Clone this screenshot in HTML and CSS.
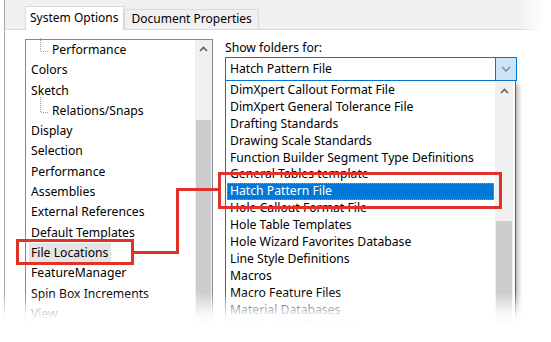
FILE: index.html
```html
<!DOCTYPE html>
<html>
<head>
<meta charset="utf-8">
<link rel="stylesheet" href="styles.css">
</head>
<body>
<div class="dialog">
  <div class="tabstrip">
    <div class="tab active">System Options</div>
    <div class="tab">Document Properties</div>
  </div>
  <div class="panel">
    <div class="tree">
      <div class="tree-items">
        <div class="row child first">Performance</div>
        <div class="row">Colors</div>
        <div class="row">Sketch</div>
        <div class="row child">Relations/Snaps</div>
        <div class="row">Display</div>
        <div class="row">Selection</div>
        <div class="row">Performance</div>
        <div class="row">Assemblies</div>
        <div class="row">External References</div>
        <div class="row">Default Templates</div>
        <div class="row"><span class="hover">File Locations</span></div>
        <div class="row">FeatureManager</div>
        <div class="row">Spin Box Increments</div>
        <div class="row">View</div>
        <div class="row">Backup/Recover</div>
      </div>
      <div class="vscroll tree-scroll">
        <div class="arrow"><svg width="9" height="6" viewBox="0 0 9 6"><path d="M1 5 L4.5 1.5 L8 5" fill="none" stroke="#606060" stroke-width="1.6"/></svg></div>
        <div class="track"></div>
        <div class="thumb"></div>
      </div>
    </div>
    <div class="right">
      <div class="label">Show folders for:</div>
      <div class="combo">
        <div class="combo-text">Hatch Pattern File</div>
        <div class="combo-btn"><svg width="10" height="6" viewBox="0 0 10 6"><path d="M1 1 L5 5 L9 1" fill="none" stroke="#808080" stroke-width="1.3"/></svg></div>
      </div>
      <div class="droplist">
        <div class="drop-items">
          <div class="ditem">DimXpert Callout Format File</div>
          <div class="ditem">DimXpert General Tolerance File</div>
          <div class="ditem">Drafting Standards</div>
          <div class="ditem">Drawing Scale Standards</div>
          <div class="ditem">Function Builder Segment Type Definitions</div>
          <div class="ditem">General Tables template</div>
          <div class="ditem selected">Hatch Pattern File</div>
          <div class="ditem">Hole Callout Format File</div>
          <div class="ditem">Hole Table Templates</div>
          <div class="ditem">Hole Wizard Favorites Database</div>
          <div class="ditem">Line Style Definitions</div>
          <div class="ditem">Macros</div>
          <div class="ditem">Macro Feature Files</div>
          <div class="ditem">Material Databases</div>
          <div class="ditem">Sensor Alert Templates</div>
        </div>
        <div class="vscroll drop-scroll">
          <div class="arrow"><svg width="9" height="6" viewBox="0 0 9 6"><path d="M1 5 L4.5 1.5 L8 5" fill="none" stroke="#606060" stroke-width="1.6"/></svg></div>
          <div class="track"></div>
          <div class="thumb"></div>
        </div>
      </div>
    </div>
  </div>
  <svg class="annot" width="551" height="342" viewBox="0 0 551 342">
    <g fill="none" stroke="#e0322b" stroke-width="3">
      <rect x="17.5" y="240.5" width="115" height="23"/>
      <rect x="219.5" y="173.5" width="281" height="34"/>
      <path d="M134 252.5 H177.5 V189.5 H219"/>
    </g>
  </svg>
  <div class="fade-bottom"></div>
  <div class="fade-right"></div>
</div>
</body>
</html>
```

FILE: styles.css
```css
* { box-sizing: border-box; }
html, body { margin: 0; padding: 0; background: #ffffff; }
body {
  font-family: "Noto Sans", "Open Sans", sans-serif;
  font-size: 12.2px;
  color: #000;
  overflow: hidden;
}
.dialog {
  position: relative;
  width: 551px;
  height: 342px;
  overflow: hidden;
  padding-left: 4px;
}
.tabstrip {
  height: 29px;
  background: #f0f0f0;
  border-left: 1px solid #a8a8a8;
  display: flex;
  align-items: flex-end;
  padding-left: 20px;
}
.tab {
  height: 20px;
  padding: 0 6px 0 7px;
  line-height: 18px;
  border: 1px solid #d9d9d9;
  border-bottom: none;
  background: #f0f0f0;
  font-size: 12px;
}
.tab.active {
  height: 24px;
  line-height: 21px;
  background: #fff;
  position: relative;
  top: 1px;
  z-index: 1;
  padding: 0 4px;
}
.panel {
  border-left: 1px solid #a8a8a8;
  border-top: 1px solid #d9d9d9;
  height: 313px;
  display: flex;
  align-items: flex-start;
  padding: 9px 0 0 20px;
  gap: 12px;
}
.tree {
  width: 188px;
  height: 320px;
  border: 1px solid #828790;
  display: flex;
  background: #fff;
}
.tree-items {
  flex: 1;
  padding-left: 5px;
}
.row {
  height: 20.3px;
  line-height: 20.3px;
  white-space: nowrap;
  position: relative;
}
.row.child {
  padding-left: 21px;
}
.row.child::before {
  content: "";
  position: absolute;
  left: 9px;
  top: -4px;
  height: 15px;
  border-left: 1px dotted #a0a0a0;
}
.row.child.first::before { top: -2px; height: 13px; }
.row.child::after {
  content: "";
  position: absolute;
  left: 10px;
  top: 11px;
  width: 7px;
  border-top: 1px dotted #a0a0a0;
}
.hover {
  display: inline-block;
  background: #e5e5e5;
  margin-left: -2px;
  padding: 0 3px 0 2px;
  height: 20px;
  line-height: 20px;
}
.vscroll {
  width: 17px;
  background: #f0f0f0;
  display: flex;
  flex-direction: column;
}
.arrow {
  height: 17px;
  display: flex;
  align-items: center;
  justify-content: center;
}
.tree-scroll .track { height: 63px; }
.thumb {
  flex: 1;
  background: #cdcdcd;
  margin: 0 1px;
}
.right {
  width: 292px;
  display: flex;
  flex-direction: column;
}
.label {
  height: 18px;
  line-height: 18px;
}
.combo {
  height: 24px;
  border: 1px solid #0078d7;
  display: flex;
  background: #fff;
}
.combo-text {
  flex: 1;
  padding-left: 4px;
  line-height: 21px;
}
.combo-btn {
  width: 21px;
  background: #cce4f7;
  border-left: 1px solid #0078d7;
  display: flex;
  align-items: center;
  justify-content: center;
}
.droplist {
  height: 270px;
  width: 291px;
  border: 1px solid #0078d7;
  border-top: none;
  display: flex;
  background: #fff;
  padding: 1px 2px 0 1px;
  box-shadow: 3px 3px 4px rgba(0,0,0,0.25);
}
.drop-items { flex: 1; }
.drop-scroll { width: 18px; margin-left: 1px; }
.ditem {
  height: 16.9px;
  line-height: 16.9px;
  padding-left: 3px;
  white-space: nowrap;
}
.ditem.selected {
  background: #0078d7;
  color: #fff;
  outline: 1px dotted #e08a2a;
  outline-offset: -1px;
}
.drop-scroll .track { height: 122px; }
.annot {
  position: absolute;
  left: 0;
  top: 0;
  pointer-events: none;
}
.fade-bottom {
  position: absolute;
  left: 0;
  right: 0;
  top: 292px;
  height: 50px;
  background: linear-gradient(to bottom, rgba(255,255,255,0) 0%, rgba(255,255,255,0.9) 46%, #fff 66%);
}
.fade-right {
  position: absolute;
  top: 0;
  bottom: 0;
  left: 518px;
  width: 33px;
  background: linear-gradient(to right, rgba(255,255,255,0), #fff 80%);
}
```
